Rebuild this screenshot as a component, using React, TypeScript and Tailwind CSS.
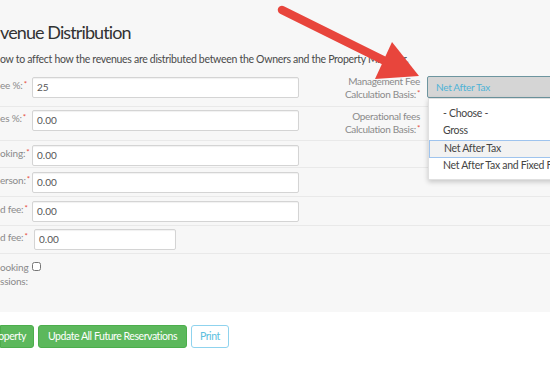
import React from 'react'

const Req = () => <span className="text-[#e74c3c] text-[8px] align-top relative -top-[1px] ml-[1px]">*</span>

function Field({ value, w = 'w-[267px]', ml = 'ml-[6px]' }: { value: string; w?: string; ml?: string }) {
  return (
    <div className={`${w} ${ml} h-[21px] shrink-0 bg-white border border-[#d4d4d4] rounded-[2px] shadow-[inset_0_1px_1px_rgba(0,0,0,.06)] flex items-center px-[4px] text-[10px] text-[#555]`}>
      {value}
    </div>
  )
}

function LeftLabel({ children }: { children: React.ReactNode }) {
  return <div className="w-[26px] shrink-0 text-right whitespace-nowrap text-[10px] tracking-[-0.2px] leading-[14px] text-[#8a8a8a] pt-[1px]">{children}</div>
}

function RightLabel({ l1, l2, mt = '' }: { l1: string; l2: string; mt?: string }) {
  return (
    <div className={`w-[124px] shrink-0 ml-[-3px] ${mt} text-right whitespace-nowrap text-[10px] leading-[12.5px] tracking-[-0.3px] text-[#8a8a8a]`}>
      <div>{l1}</div>
      <div>{l2}<Req /></div>
    </div>
  )
}

export default function App() {
  return (
    <div className="relative w-[550px] h-[378px] overflow-hidden bg-white font-['Lato',sans-serif]">
      <div className="h-[312px] bg-[#f7f7f7] pt-[19px]">
        <h1 className="text-[18px] leading-[26px] text-[#333] tracking-[-0.9px]">venue Distribution</h1>
        <p className="mt-[7px] text-[10.5px] leading-[14px] tracking-[-0.3px] text-[#4a4a4a] whitespace-nowrap">
          ow to affect how the revenues are distributed between the Owners and the Property Manager.
        </p>

        <div className="mt-[7px]">
          <div className="h-[34px] flex items-start pt-[4px] border-b border-[#e9e9e9]">
            <LeftLabel>ee %:<Req /></LeftLabel>
            <Field value="25" />
            <RightLabel l1="Management Fee" l2="Calculation Basis:" mt="-mt-[2px]" />
            <div className="ml-[7px] -mt-[1px] w-[140px] h-[22px] shrink-0 bg-[#d5d5d5] border border-[#6d959f] rounded-[2px] flex items-center px-[8px] text-[10px] tracking-[-0.3px] text-[#4fb3d6]">
              Net After Tax
            </div>
          </div>
          <div className="h-[34px] flex items-start pt-[3px] border-b border-[#e9e9e9]">
            <LeftLabel>es %:<Req /></LeftLabel>
            <Field value="0.00" />
            <RightLabel l1="Operational fees" l2="Calculation Basis:" />
          </div>
          <div className="h-[27px] flex items-start pt-[4px] border-b border-[#e9e9e9]">
            <LeftLabel>oking:<Req /></LeftLabel>
            <Field value="0.00" />
          </div>
          <div className="h-[29px] flex items-start pt-[4px] border-b border-[#e9e9e9]">
            <LeftLabel>erson:<Req /></LeftLabel>
            <Field value="0.00" />
          </div>
          <div className="h-[29px] flex items-start pt-[4px] border-b border-[#e9e9e9]">
            <LeftLabel>d fee:<Req /></LeftLabel>
            <Field value="0.00" />
          </div>
          <div className="h-[28px] flex items-start pt-[3px] border-b border-[#e9e9e9]">
            <LeftLabel>d fee:<Req /></LeftLabel>
            <Field value="0.00" w="w-[142px]" ml="ml-[8px]" />
          </div>
          <div className="flex items-start pt-[6px]">
            <div className="w-[26px] shrink-0 text-right whitespace-nowrap text-[10px] tracking-[-0.2px] leading-[14px] text-[#8a8a8a]">
              <div>ooking</div>
              <div>ssions:</div>
            </div>
            <input type="checkbox" className="ml-[6px] mt-[2px] w-[9px] h-[9px] accent-[#999]" />
          </div>
        </div>
      </div>

      <div className="flex gap-[4px] pt-[13px] text-[10.5px] tracking-[-0.45px]">
        <button className="h-[23px] w-[34px] shrink-0 bg-[#5cb85c] border border-[#4cae4c] rounded-r-[3px] text-white flex items-center justify-end pr-[7px] whitespace-nowrap">operty</button>
        <button className="h-[23px] px-[9px] bg-[#5cb85c] border border-[#4cae4c] rounded-[3px] text-white whitespace-nowrap">Update All Future Reservations</button>
        <button className="h-[23px] px-[8px] bg-white border border-[#8fd3ee] rounded-[3px] text-[#5bc0de]">Print</button>
      </div>

      {/* dropdown menu */}
      <div className="absolute left-[428px] top-[98px] w-[140px] bg-white border border-[#e0e0e0] shadow-[0_2px_5px_rgba(0,0,0,.2)] pt-[6px] pb-[4px] text-[10.5px] tracking-[-0.3px] text-[#444]">
        {['- Choose -', 'Gross', 'Net After Tax', 'Net After Tax and Fixed Fees'].map((o) => (
          <div key={o} className={`h-[17.5px] flex items-center px-[14px] whitespace-nowrap ${o === 'Net After Tax' ? 'bg-[#f2f2f2] border border-[#9fc4ee]' : ''}`}>{o}</div>
        ))}
      </div>

      {/* annotation arrow */}
      <svg className="absolute inset-0 pointer-events-none" width="550" height="378" viewBox="0 0 550 378">
        <line x1="282" y1="10" x2="386" y2="61.5" stroke="#e8453c" strokeWidth="8.5" strokeLinecap="round" />
        <polygon points="419,76 375,79 392,42" fill="#e8453c" />
      </svg>
    </div>
  )
}
